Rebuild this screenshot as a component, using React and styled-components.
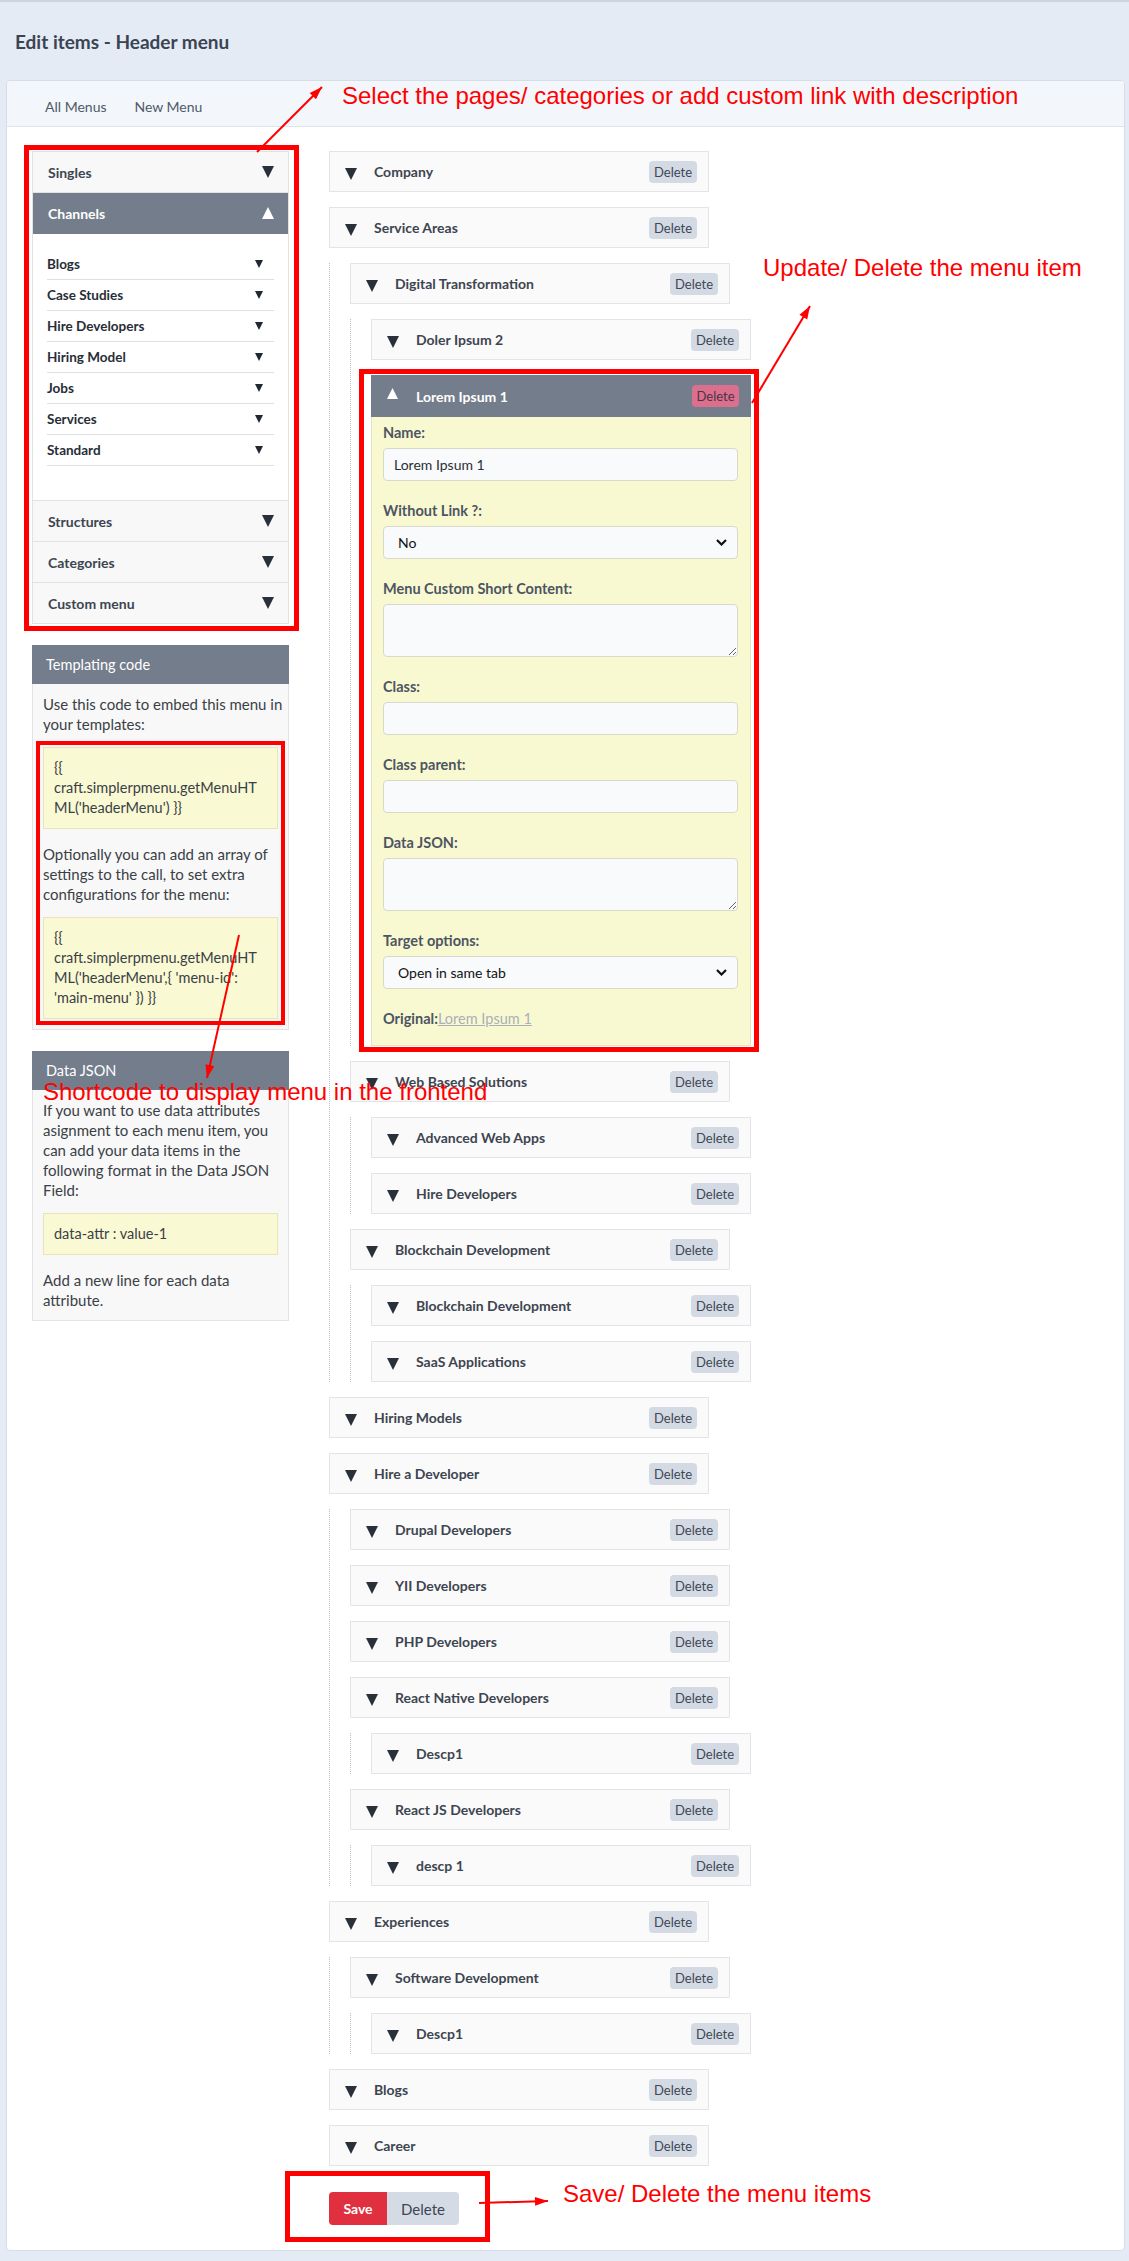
import React from 'react';
import styled, { createGlobalStyle } from 'styled-components';

const GlobalStyle = createGlobalStyle`
  html, body { margin: 0; padding: 0; }
  body {
    background: #e4ebf5;
    font-family: Lato, "Noto Sans", sans-serif;
    color: #3a4250;
  }
  * { box-sizing: border-box; }
`;

const tree = [
  { label: 'Company' },
  {
    label: 'Service Areas',
    children: [
      {
        label: 'Digital Transformation',
        children: [{ label: 'Doler Ipsum 2' }, { label: 'Lorem Ipsum 1', open: true }],
      },
      {
        label: 'Web Based Solutions',
        children: [{ label: 'Advanced Web Apps' }, { label: 'Hire Developers' }],
      },
      {
        label: 'Blockchain Development',
        children: [{ label: 'Blockchain Development' }, { label: 'SaaS Applications' }],
      },
    ],
  },
  { label: 'Hiring Models' },
  {
    label: 'Hire a Developer',
    children: [
      { label: 'Drupal Developers' },
      { label: 'YII Developers' },
      { label: 'PHP Developers' },
      { label: 'React Native Developers', children: [{ label: 'Descp1' }] },
      { label: 'React JS Developers', children: [{ label: 'descp 1' }] },
    ],
  },
  {
    label: 'Experiences',
    children: [{ label: 'Software Development', children: [{ label: 'Descp1' }] }],
  },
  { label: 'Blogs' },
  { label: 'Career' },
];

const channels = ['Blogs', 'Case Studies', 'Hire Developers', 'Hiring Model', 'Jobs', 'Services', 'Standard'];

// annotation arrows: [x1, y1, x2, y2], head at the end
const arrows = [
  [257, 152, 322, 87],
  [752, 403, 810, 306],
  [239, 935, 207, 1078],
  [479, 2203, 548, 2201],
];

const Page = styled.div`
  position: relative;
  width: 1129px;
  min-height: 2261px;
  background: #e4ebf5;
`;

const TopLine = styled.div`
  height: 2px;
  background: #cbd4e1;
`;

const Title = styled.h1`
  margin: 0;
  height: 78px;
  padding: 0 15px;
  display: flex;
  align-items: center;
  font-size: 19px;
  font-weight: 700;
  color: #3a4452;
`;

const Card = styled.div`
  margin: 0 4px 0 6px;
  background: #fff;
  border: 1px solid #d5dde8;
  border-radius: 4px;
  overflow: hidden;
`;

const Tabs = styled.div`
  height: 46px;
  display: flex;
  align-items: center;
  gap: 28px;
  padding: 6px 0 0 38px;
  background: #f3f6fa;
  border-bottom: 1px solid #dde4ec;
`;

const Tab = styled.a`
  font-size: 14px;
  color: #4f5a6a;
  text-decoration: none;
`;

const Content = styled.div`
  display: flex;
  align-items: flex-start;
  gap: 40px;
  padding: 24px 0 25px 25px;
`;

const LeftCol = styled.div`
  width: 257px;
  flex: none;
  display: flex;
  flex-direction: column;
  gap: 21px;
`;

const Accordion = styled.div`
  border: 1px solid #e2e2e2;
  background: #fff;
`;

const AccHeader = styled.div`
  height: 41px;
  display: flex;
  align-items: center;
  justify-content: space-between;
  padding: 0 14px 0 15px;
  background: ${p => (p.$active ? '#737d8b' : '#f8f8f8')};
  color: ${p => (p.$active ? '#fff' : '#3d4552')};
  border-bottom: 1px solid ${p => (p.$active ? '#737d8b' : '#e2e2e2')};
  font-size: 14px;
  font-weight: 700;
  &:last-child { border-bottom: none; height: 40px; }
`;

const ChannelBody = styled.div`
  padding: 15px 14px 34px;
  border-bottom: 1px solid #e2e2e2;
  background: #fff;
`;

const ChannelItem = styled.div`
  height: 31px;
  display: flex;
  align-items: center;
  justify-content: space-between;
  padding-right: 11px;
  border-bottom: 1px solid #e0e0e0;
  font-size: 13.5px;
  font-weight: 700;
  color: #272d36;
`;

const Panel = styled.div``;

const PanelHeader = styled.div`
  height: 39px;
  display: flex;
  align-items: center;
  padding-left: 14px;
  background: #737d8b;
  color: #fff;
  font-size: 14.5px;
`;

const PanelBody = styled.div`
  padding: 10px;
  background: #f8f8f8;
  border: 1px solid #e3e3e3;
  border-top: none;
  font-size: 15px;
  line-height: 20px;
  color: #3b3f46;
`;

const Para = styled.p`
  margin: 0 0 13px;
  &:last-child { margin-bottom: 0; }
  span { display: block; white-space: nowrap; }
`;

const Code = styled.div`
  margin: 0 0 15px;
  padding: 10px;
  background: #f9f9d3;
  border: 1px solid #e7e5b5;
  color: #3b3f46;
  font-size: 14.5px;
  &:last-child { margin-bottom: 0; }
  span { display: block; white-space: nowrap; }
`;

const RightCol = styled.div`
  display: flex;
  flex-direction: column;
`;

const Tree = styled.div`
  display: flex;
  flex-direction: column;
  gap: 15px;
`;

const Node = styled.div`
  display: flex;
  flex-direction: column;
  gap: 15px;
`;

const Children = styled.div`
  display: flex;
  flex-direction: column;
  gap: 15px;
  padding-left: 20px;
  border-left: 1px dotted #c2c2c2;
`;

const Row = styled.div`
  width: 380px;
  height: ${p => (p.$open ? 42 : 41)}px;
  display: flex;
  align-items: center;
  padding: ${p => (p.$open ? '0 12px 0 16px' : '0 11px 0 15px')};
  background: ${p => (p.$open ? '#737d8b' : '#fafafa')};
  border: ${p => (p.$open ? 'none' : '1px solid #e3e4e6')};
  color: ${p => (p.$open ? '#fff' : '#3d4550')};
  font-size: 14px;
  font-weight: 700;
`;

const Caret = styled.span`
  width: 29px;
  flex: none;
  display: flex;
  align-items: center;
  margin-top: ${p => (p.$up ? '-5px' : '5px')};
`;

const RowLabel = styled.span`
  flex: 1;
`;

const SmallDelete = styled.button`
  width: ${p => (p.$danger ? 47 : 48)}px;
  height: 22px;
  padding: 0;
  border: none;
  border-radius: 4px;
  background: ${p => (p.$danger ? '#da6f8e' : '#d4dae3')};
  color: ${p => (p.$danger ? '#4e3344' : '#3d4756')};
  font-family: inherit;
  font-size: 13px;
`;

const Expanded = styled.div`
  width: 380px;
`;

const EditBody = styled.div`
  padding: 6px 12px 16px 11px;
  background: #f9f9d1;
  border: 1px solid #e4e3bf;
  border-top: none;
`;

const Field = styled.div`
  margin-bottom: 20px;
`;

const Label = styled.label`
  display: block;
  margin-bottom: 5px;
  font-size: 14.5px;
  line-height: 20px;
  font-weight: 700;
  color: #4d5562;
`;

const Input = styled.input`
  display: block;
  width: 100%;
  height: 33px;
  padding: 0 10px;
  border: 1px solid #d8d9cc;
  border-radius: 4px;
  background: #f8fafc;
  font-family: inherit;
  font-size: 14px;
  color: #2a2f36;
`;

const TextArea = styled.textarea`
  display: block;
  width: 100%;
  height: 53px;
  padding: 6px 10px;
  border: 1px solid #d8d9cc;
  border-radius: 4px;
  background: #f8fafc;
  font-family: inherit;
  font-size: 14px;
`;

const SelectWrap = styled.div`
  position: relative;
  svg {
    position: absolute;
    right: 11px;
    top: 13px;
    pointer-events: none;
  }
`;

const Select = styled.select`
  display: block;
  width: 100%;
  height: 33px;
  padding: 0 14px;
  appearance: none;
  border: 1px solid #d8d9cc;
  border-radius: 4px;
  background: #f8fafc;
  font-family: inherit;
  font-size: 14px;
  color: #111;
`;

const Original = styled.div`
  font-size: 14.5px;
  line-height: 20px;
  font-weight: 700;
  color: #4d5562;
  a {
    font-weight: 400;
    color: #a9b0b8;
    text-decoration: underline;
  }
`;

const ButtonGroup = styled.div`
  display: flex;
  margin-top: 26px;
`;

const GroupButton = styled.button`
  height: 33px;
  width: ${p => (p.$primary ? 58 : 72)}px;
  padding: 0;
  border: none;
  border-radius: ${p => (p.$primary ? '4px 0 0 4px' : '0 4px 4px 0')};
  background: ${p => (p.$primary ? '#e02f3e' : '#d5dbe4')};
  color: ${p => (p.$primary ? '#fff' : '#3c4555')};
  font-family: inherit;
  font-size: ${p => (p.$primary ? 14 : 15)}px;
  font-weight: ${p => (p.$primary ? 700 : 400)};
`;

const Overlay = styled.div`
  position: absolute;
  inset: 0;
  pointer-events: none;
  z-index: 10;
`;

const Mark = styled.div`
  position: absolute;
  left: ${p => p.$x}px;
  top: ${p => p.$y}px;
  width: ${p => p.$w}px;
  height: ${p => p.$h}px;
  border: ${p => p.$t || 5}px solid #ff0000;
`;

const Note = styled.span`
  position: absolute;
  left: ${p => p.$x}px;
  top: ${p => p.$y}px;
  white-space: nowrap;
  font-family: "Liberation Sans", Arial, sans-serif;
  font-size: 24px;
  line-height: 28px;
  color: #ff0000;
`;

const ArrowLayer = styled.svg`
  position: absolute;
  left: 0;
  top: 0;
`;

const Tri = ({ up, size = 12, color = '#2a303a' }) => (
  <svg width={size} height={size} viewBox="0 0 12 12">
    <polygon points={up ? '6,0 12,12 0,12' : '0,0 12,0 6,12'} fill={color} />
  </svg>
);

const Chevron = () => (
  <svg width="11" height="7" viewBox="0 0 11 7">
    <path d="M1 1 L5.5 5.5 L10 1" fill="none" stroke="#111" strokeWidth="2.2" />
  </svg>
);

const arrowHead = ([x1, y1, x2, y2]) => {
  const len = Math.hypot(x2 - x1, y2 - y1);
  const ux = (x2 - x1) / len;
  const uy = (y2 - y1) / len;
  const bx = x2 - ux * 13;
  const by = y2 - uy * 13;
  const px = -uy * 4.5;
  const py = ux * 4.5;
  return `${x2},${y2} ${bx + px},${by + py} ${bx - px},${by - py}`;
};

// text blocks keep the line breaks of the original panel
const Lines = ({ as: Comp, lines }) => (
  <Comp>
    {lines.map((l, i) => (
      <span key={i}>{l}</span>
    ))}
  </Comp>
);

const EditForm = ({ label }) => (
  <Expanded>
    <Row $open>
      <Caret $up>
        <Tri up size={11} color="#fff" />
      </Caret>
      <RowLabel>{label}</RowLabel>
      <SmallDelete $danger>Delete</SmallDelete>
    </Row>
    <EditBody>
      <Field>
        <Label>Name:</Label>
        <Input defaultValue={label} />
      </Field>
      <Field>
        <Label>Without Link ?:</Label>
        <SelectWrap>
          <Select defaultValue="no">
            <option value="no">No</option>
            <option value="yes">Yes</option>
          </Select>
          <Chevron />
        </SelectWrap>
      </Field>
      <Field>
        <Label>Menu Custom Short Content:</Label>
        <TextArea />
      </Field>
      <Field>
        <Label>Class:</Label>
        <Input />
      </Field>
      <Field>
        <Label>Class parent:</Label>
        <Input />
      </Field>
      <Field>
        <Label>Data JSON:</Label>
        <TextArea />
      </Field>
      <Field>
        <Label>Target options:</Label>
        <SelectWrap>
          <Select defaultValue="same">
            <option value="same">Open in same tab</option>
            <option value="new">Open in new tab</option>
          </Select>
          <Chevron />
        </SelectWrap>
      </Field>
      <Original>
        Original:<a href="#">{label}</a>
      </Original>
    </EditBody>
  </Expanded>
);

const TreeNode = ({ node }) => (
  <Node>
    {node.open ? (
      <EditForm label={node.label} />
    ) : (
      <Row>
        <Caret>
          <Tri />
        </Caret>
        <RowLabel>{node.label}</RowLabel>
        <SmallDelete>Delete</SmallDelete>
      </Row>
    )}
    {node.children && (
      <Children>
        {node.children.map((c, i) => (
          <TreeNode key={i} node={c} />
        ))}
      </Children>
    )}
  </Node>
);

const App = () => {
  return (
    <Page>
      <GlobalStyle />
      <TopLine />
      <Title>Edit items - Header menu</Title>
      <Card>
        <Tabs>
          <Tab href="#">All Menus</Tab>
          <Tab href="#">New Menu</Tab>
        </Tabs>
        <Content>
          <LeftCol>
            <Accordion>
              <AccHeader>
                Singles <Tri />
              </AccHeader>
              <AccHeader $active>
                Channels <Tri up color="#fff" />
              </AccHeader>
              <ChannelBody>
                {channels.map(c => (
                  <ChannelItem key={c}>
                    {c} <Tri size={8} color="#222831" />
                  </ChannelItem>
                ))}
              </ChannelBody>
              <AccHeader>
                Structures <Tri />
              </AccHeader>
              <AccHeader>
                Categories <Tri />
              </AccHeader>
              <AccHeader>
                Custom menu <Tri />
              </AccHeader>
            </Accordion>

            <Panel>
              <PanelHeader>Templating code</PanelHeader>
              <PanelBody>
                <Lines as={Para} lines={['Use this code to embed this menu in', 'your templates:']} />
                <Lines as={Code} lines={['{{', 'craft.simplerpmenu.getMenuHT', "ML('headerMenu') }}"]} />
                <Lines
                  as={Para}
                  lines={[
                    'Optionally you can add an array of',
                    'settings to the call, to set extra',
                    'configurations for the menu:',
                  ]}
                />
                <Lines
                  as={Code}
                  lines={['{{', 'craft.simplerpmenu.getMenuHT', "ML('headerMenu',{ 'menu-id':", "'main-menu' }) }}"]}
                />
              </PanelBody>
            </Panel>

            <Panel>
              <PanelHeader>Data JSON</PanelHeader>
              <PanelBody>
                <Lines
                  as={Para}
                  lines={[
                    'If you want to use data attributes',
                    'asignment to each menu item, you',
                    'can add your data items in the',
                    'following format in the Data JSON',
                    'Field:',
                  ]}
                />
                <Lines as={Code} lines={['data-attr : value-1']} />
                <Lines as={Para} lines={['Add a new line for each data', 'attribute.']} />
              </PanelBody>
            </Panel>
          </LeftCol>

          <RightCol>
            <Tree>
              {tree.map((n, i) => (
                <TreeNode key={i} node={n} />
              ))}
            </Tree>
            <ButtonGroup>
              <GroupButton $primary>Save</GroupButton>
              <GroupButton>Delete</GroupButton>
            </ButtonGroup>
          </RightCol>
        </Content>
      </Card>

      <Overlay>
        <Mark $x={24} $y={145} $w={275} $h={486} />
        <Mark $x={36} $y={741} $w={249} $h={284} $t={4} />
        <Mark $x={359} $y={369} $w={400} $h={683} />
        <Mark $x={285} $y={2171} $w={205} $h={71} />

        <Note $x={342} $y={82}>Select the pages/ categories or add custom link with description</Note>
        <Note $x={763} $y={254}>Update/ Delete the menu item</Note>
        <Note $x={43} $y={1078}>Shortcode to display menu in the frontend</Note>
        <Note $x={563} $y={2180}>Save/ Delete the menu items</Note>

        <ArrowLayer width="1129" height="2261" viewBox="0 0 1129 2261">
          {arrows.map((a, i) => (
            <g key={i}>
              <line x1={a[0]} y1={a[1]} x2={a[2]} y2={a[3]} stroke="#ff0000" strokeWidth="2" />
              <polygon points={arrowHead(a)} fill="#ff0000" />
            </g>
          ))}
        </ArrowLayer>
      </Overlay>
    </Page>
  );
};

export default App;
